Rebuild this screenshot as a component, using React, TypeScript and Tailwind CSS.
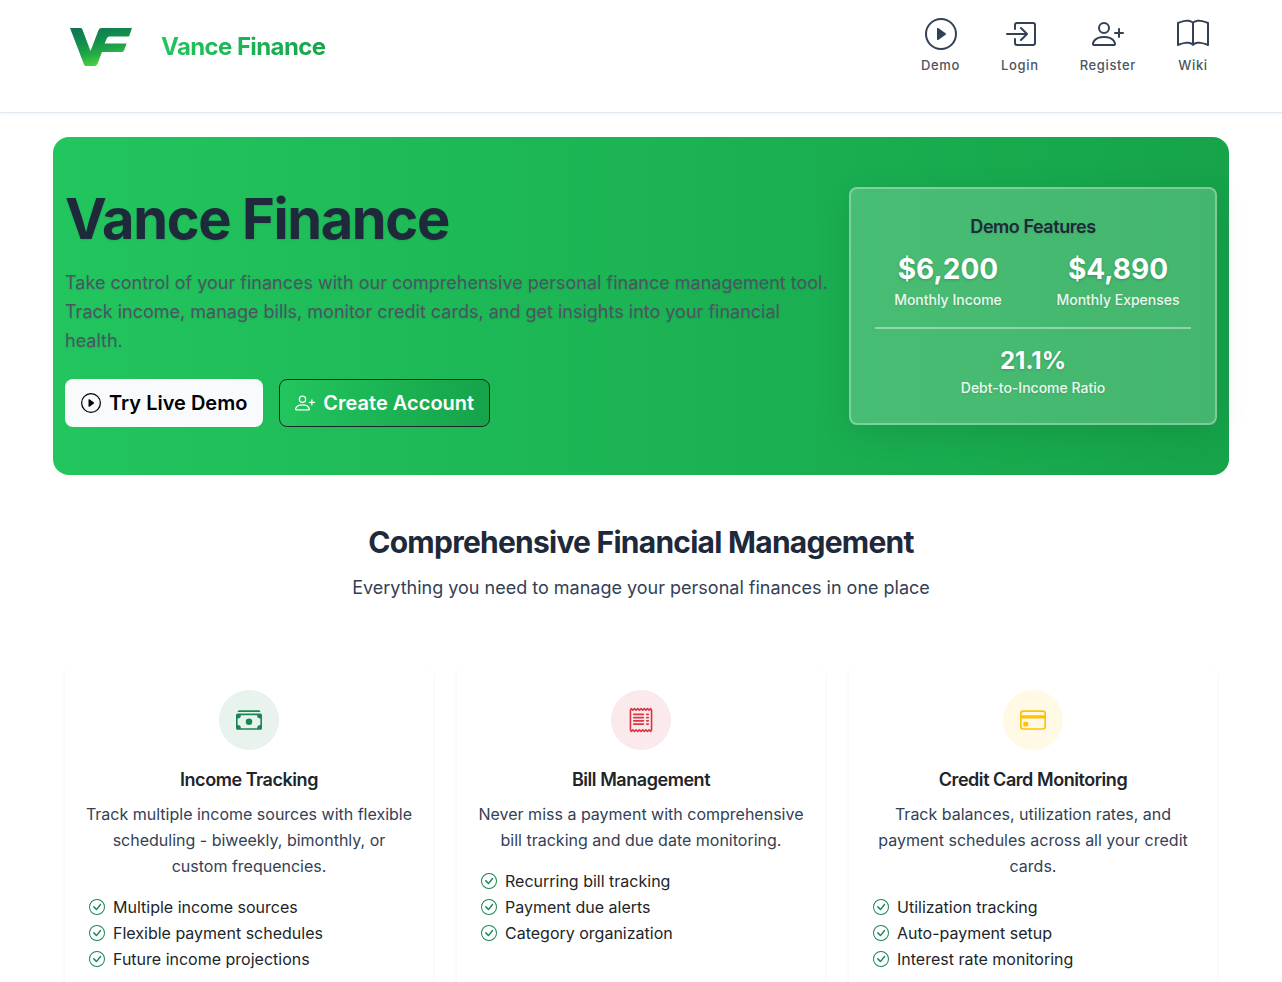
import { useId } from "react";
import type { IconType } from "react-icons";
import {
  BsBook,
  BsBoxArrowInRight,
  BsCashStack,
  BsCheckCircle,
  BsCreditCard,
  BsPersonPlus,
  BsPlayCircle,
  BsReceipt,
} from "react-icons/bs";

const navItems: { label: string; href: string; icon: IconType }[] = [
  { label: "Demo", href: "#demo", icon: BsPlayCircle },
  { label: "Login", href: "#login", icon: BsBoxArrowInRight },
  { label: "Register", href: "#register", icon: BsPersonPlus },
  { label: "Wiki", href: "#wiki", icon: BsBook },
];

const features: {
  title: string;
  text: string;
  icon: IconType;
  tone: string;
  points: string[];
}[] = [
  {
    title: "Income Tracking",
    text: "Track multiple income sources with flexible scheduling - biweekly, bimonthly, or custom frequencies.",
    icon: BsCashStack,
    tone: "bg-[#198754]/10 text-[#198754]",
    points: ["Multiple income sources", "Flexible payment schedules", "Future income projections"],
  },
  {
    title: "Bill Management",
    text: "Never miss a payment with comprehensive bill tracking and due date monitoring.",
    icon: BsReceipt,
    tone: "bg-[#dc3545]/10 text-[#dc3545]",
    points: ["Recurring bill tracking", "Payment due alerts", "Category organization"],
  },
  {
    title: "Credit Card Monitoring",
    text: "Track balances, utilization rates, and payment schedules across all your credit cards.",
    icon: BsCreditCard,
    tone: "bg-[#ffc107]/10 text-[#ffc107]",
    points: ["Utilization tracking", "Auto-payment setup", "Interest rate monitoring"],
  },
];

function Logo() {
  const id = useId();
  return (
    <svg viewBox="0 0 62 38" className="h-[38px] w-[62px]" aria-hidden="true">
      <defs>
        <linearGradient id={id} x1="12" y1="0" x2="20" y2="38" gradientUnits="userSpaceOnUse">
          <stop offset="0" stopColor="#0d7658" />
          <stop offset="0.4" stopColor="#148f4c" />
          <stop offset="0.7" stopColor="#22a846" />
          <stop offset="1" stopColor="#48cf40" />
        </linearGradient>
      </defs>
      <path
        fill={`url(#${id})`}
        d="M0 0H10.5Q11.8 0 12.4 1.4L20.5 23L28.6 2Q29.4 0 31.5 0H62L59.4 7.4Q59 8.6 57.6 8.6H39.5Q37.6 8.6 36.9 10.2L34.6 15.4H56.6L54 22.6Q53.5 24 52 24H32L27.4 36Q26.6 38 24.6 38H16Q14.6 38 14 36.4Z"
      />
    </svg>
  );
}

function Stat({ value, label, small }: { value: string; label: string; small?: boolean }) {
  return (
    <div className="flex-1">
      <div
        className={
          small
            ? "text-2xl leading-8 font-bold text-shadow-[0_1px_3px_rgba(0,0,0,0.2)]"
            : "text-[28px] leading-10 font-bold text-shadow-[0_1px_3px_rgba(0,0,0,0.2)]"
        }
      >
        {value}
      </div>
      <div className="text-sm leading-[22px] font-medium text-white/90 text-shadow-[0_1px_2px_rgba(0,0,0,0.1)]">
        {label}
      </div>
    </div>
  );
}

export default function App() {
  return (
    <div className="min-h-screen bg-white font-['Inter','Liberation_Sans',sans-serif] text-[#212529]">
      <header className="border-b border-[#e2e8f0] bg-white shadow-[0_1px_3px_rgba(0,0,0,0.05)]">
        <div className="mx-auto flex h-28 max-w-[1200px] items-start justify-between px-3">
          <a href="#home" className="flex items-center gap-[29px] pt-7 pl-[17px]">
            <Logo />
            <span className="bg-linear-to-r from-[#22c55e] to-[#16a34a] bg-clip-text text-2xl font-bold tracking-tight text-transparent">
              Vance Finance
            </span>
          </a>
          <nav className="flex gap-px pt-[18px]">
            {navItems.map(({ label, href, icon: Icon }) => (
              <a key={label} href={href} className="flex flex-col items-center px-5 text-[#334155]">
                <Icon className="size-8" />
                <span className="mt-1 text-[13px] leading-[22px] font-medium tracking-wider text-[#4b5563]">
                  {label}
                </span>
              </a>
            ))}
          </nav>
        </div>
      </header>

      <main className="mx-auto max-w-[1200px] px-3 pt-6">
        <section className="grid grid-cols-3 items-center rounded-2xl bg-linear-to-r from-[#22c55e] to-[#16a34a] py-12">
          <div className="col-span-2 px-3">
            <h1 className="text-[56px] leading-[69px] font-bold tracking-tight text-[#1e293b] text-shadow-[0_1px_2px_rgba(0,0,0,0.1)]">
              Vance Finance
            </h1>
            <p className="mt-3.5 -mr-1 text-lg leading-[29px] text-[#4b5563] text-shadow-[0_1px_2px_rgba(0,0,0,0.1)]">
              Take control of your finances with our comprehensive personal finance management tool. Track income,
              manage bills, monitor credit cards, and get insights into your financial health.
            </p>
            <div className="mt-6 flex gap-4">
              <button
                type="button"
                className="flex h-12 items-center gap-2 rounded-lg bg-[#f8fafc] px-4 text-xl font-semibold text-black"
              >
                <BsPlayCircle className="size-5" />
                Try Live Demo
              </button>
              <button
                type="button"
                className="flex h-12 items-center gap-2 rounded-lg border border-[#212529] bg-linear-to-r from-[#22c55e] to-[#16a34a] px-[15px] text-xl font-semibold text-white"
              >
                <BsPersonPlus className="size-5" />
                Create Account
              </button>
            </div>
          </div>
          <div className="px-3">
            <div className="rounded-lg border-2 border-white/30 bg-white/20 p-6 text-center text-white shadow-[0_8px_32px_rgba(0,0,0,0.1)]">
              <h2 className="text-lg leading-7 font-semibold tracking-tight text-[#1e293b] text-shadow-[0_1px_2px_rgba(0,0,0,0.1)]">
                Demo Features
              </h2>
              <div className="mt-2 flex gap-6">
                <Stat value="$6,200" label="Monthly Income" />
                <Stat value="$4,890" label="Monthly Expenses" />
              </div>
              <div className="mt-4 mb-4 border-t-2 border-white/40" />
              <Stat value="21.1%" label="Debt-to-Income Ratio" small />
            </div>
          </div>
        </section>

        <section className="pt-12 text-center">
          <h2 className="text-3xl leading-[38px] font-bold tracking-tight text-[#1e293b]">
            Comprehensive Financial Management
          </h2>
          <p className="mt-3 text-lg leading-[30px] text-[#334155]">
            Everything you need to manage your personal finances in one place
          </p>
        </section>

        <section className="mt-[63px] grid grid-cols-3 gap-6 px-3 pb-12">
          {features.map(({ title, text, icon: Icon, tone, points }) => (
            <article key={title} className="rounded-lg bg-white p-6 shadow-[0_2px_4px_rgba(0,0,0,0.06)]">
              <div className={`mx-auto flex size-[60px] items-center justify-center rounded-full ${tone}`}>
                <Icon className="size-[26px]" />
              </div>
              <h3 className="mt-4 text-center text-lg leading-7 font-semibold tracking-tight">{title}</h3>
              <p className="-mx-1 mt-[7px] text-center leading-[26px] text-[#334155]">{text}</p>
              <ul className="mt-[15px]">
                {points.map((point) => (
                  <li key={point} className="flex items-center gap-2 leading-[26px]">
                    <BsCheckCircle className="size-4 text-[#198754]" />
                    {point}
                  </li>
                ))}
              </ul>
            </article>
          ))}
        </section>
      </main>
    </div>
  );
}
